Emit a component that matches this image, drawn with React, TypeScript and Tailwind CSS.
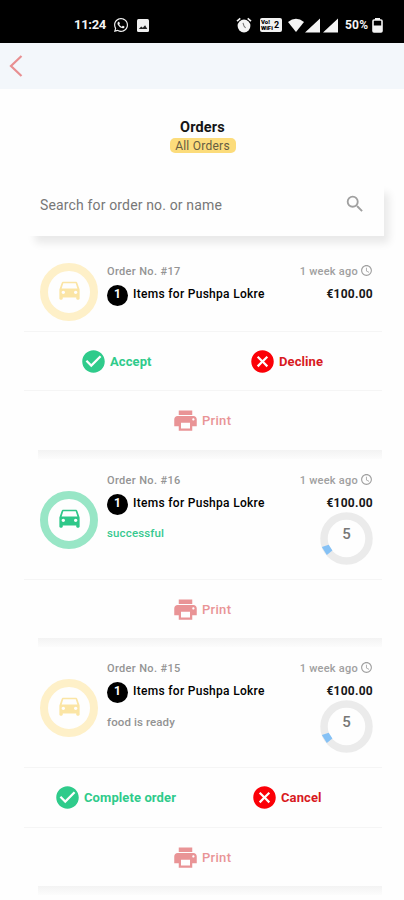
import React from "react";
import {
  MdAccessTime,
  MdCancel,
  MdCheckCircle,
  MdDirectionsCar,
  MdPrint,
  MdSearch,
} from "react-icons/md";
import { FaWhatsapp } from "react-icons/fa";

type Order = {
  id: number;
  status?: string;
  done?: boolean;
  timer?: boolean;
  accept?: string;
  reject?: string;
};

const orders: Order[] = [
  { id: 17, accept: "Accept", reject: "Decline" },
  { id: 16, status: "successful", done: true, timer: true },
  { id: 15, status: "food is ready", timer: true, accept: "Complete order", reject: "Cancel" },
];

function StatusBar() {
  return (
    <div className="flex h-[43px] items-start bg-black pt-[15px] text-[#f4f4f4]">
      <div className="ml-[74px] flex h-5 w-[78px] items-center">
        <span className="w-[39px] text-[13px] font-bold leading-5 tracking-[-0.3px]">11:24</span>
        <FaWhatsapp size={16} className="shrink-0" />
        <svg className="ml-[8px] shrink-0" width="12" height="13" viewBox="0 0 12 13">
          <rect width="12" height="13" rx="1.5" fill="#f0f0f0" />
          <path d="M1.8 10l2.4-2.5 1.6 1.2 2.3-2.4 2.2 3.7z" fill="#222" />
        </svg>
      </div>
      <div className="ml-[84px] flex h-5 items-center">
        <svg width="16" height="16" viewBox="0 0 16 16">
          <circle cx="8" cy="9" r="6.4" fill="#f4f4f4" />
          <path d="M1 4.2L4.3 1.4M15 4.2l-3.3-2.8" stroke="#f4f4f4" strokeWidth="1.6" />
          <path d="M7 5.8l1 3.2 1.6 2" stroke="#777" strokeWidth="1.1" fill="none" />
        </svg>
        <div className="ml-[8px] flex h-[14px] w-[22px] items-center rounded-[2px] bg-[#f2f2f2] text-black">
          <div className="flex w-[14px] flex-col pl-px text-[6px] font-black leading-[6px]">
            <span>Vo!</span>
            <span>WiFi</span>
          </div>
          <span className="text-[9px] font-bold leading-none">2</span>
        </div>
        <svg className="ml-[6px]" width="53" height="15" viewBox="0 0 53 15" fill="#f5f5f5">
          <path d="M0 4Q8 -2.5 16 4L8 14z" />
          <path d="M17 14.5L32 .5v14zM35 14.5L50 .5v14z" />
        </svg>
        <span className="ml-[4px] w-[25px] text-[12px] font-bold leading-5 tracking-[0.2px]">50%</span>
        <svg className="ml-[2px]" width="11" height="15" viewBox="0 0 11 15">
          <path d="M3 0h5v2h-5z" fill="#f4f4f4" />
          <rect x="1" y="2" width="9" height="12" rx="1" fill="none" stroke="#f4f4f4" strokeWidth="1.6" />
          <path d="M1 7.5h9V14H1z" fill="#f4f4f4" />
        </svg>
      </div>
    </div>
  );
}

function Timer() {
  return (
    <div className="grid h-[53px] w-[53px] place-items-center">
      <svg className="col-start-1 row-start-1" width="53" height="53" viewBox="0 0 53 53">
        <circle cx="26.5" cy="26.5" r="22.5" fill="none" stroke="#ebebeb" strokeWidth="7.5" />
        <path d="M1.8 35L8.7 32.8L12.4 38.4L6.8 43z" fill="#85c1f5" />
      </svg>
      <span className="col-start-1 row-start-1 -mt-[9px] text-[15px] font-medium leading-5 text-[#777]">5</span>
    </div>
  );
}

function Action({ label, accept }: { label: string; accept?: boolean }) {
  return (
    <div className={"flex items-center gap-[3px] text-[13px] font-bold " + (accept ? "tracking-[0.1px] text-[#2fcb8b]" : "tracking-[0.1px] text-[#d81a1f]")}>
      {accept ? <MdCheckCircle size={27} className="text-[#2fcb8b]" /> : <MdCancel size={27} className="text-[#fb0007]" />}
      <span className="pt-px">{label}</span>
    </div>
  );
}

function OrderCard({ order }: { order: Order }) {
  const ring = order.done ? "border-[#98e6c6] text-[#2fc789]" : "border-[#fef0c8] text-[#fbe5a5]";
  return (
    <article className="ml-6 mr-[22px]">
      <div className={"flex pl-4 " + (order.timer ? "h-[129px]" : "h-[90px]")}>
        <div className={"flex h-[58px] w-[58px] shrink-0 items-center justify-center rounded-full border-8 pb-[5px] " + ring + (order.timer ? " mt-[41px]" : " mt-[22px]")}>
          <MdDirectionsCar size={27} className="shrink-0" />
        </div>
        <div className="ml-[9px] flex-1 pt-[22px]">
          <div className="h-4 whitespace-nowrap pt-px text-[11px] font-medium leading-4 tracking-[0.35px] text-[#949494]">Order No. #{order.id}</div>
          <div className="mt-[4px] flex h-[22px] items-start">
            <span className="mt-[2px] flex h-[21px] w-[21px] items-center justify-center rounded-full bg-black pb-[3px] text-[12px] font-bold text-white">1</span>
            <span className="ml-[5px] whitespace-nowrap pt-px text-[12px] font-medium leading-[20px] tracking-[0.3px] text-black">Items for Pushpa Lokre</span>
          </div>
          {order.status && (
            <div className={"mt-[11px] text-[11.5px] font-medium leading-4 " + (order.done ? "tracking-[0.15px] text-[#38c990]" : "pt-px tracking-[0.1px] text-[#939393]")}>{order.status}</div>
          )}
        </div>
        <div className="mr-[9px] flex w-[78px] flex-col items-end pt-[22px]">
          <div className="flex h-4 items-center gap-[2px] whitespace-nowrap text-[11px] font-medium tracking-[0.25px] text-[#a0a0a0]">
            <span className="pt-[2px]">1 week ago</span>
            <MdAccessTime size={13} className="-mt-px" />
          </div>
          <div className="mt-[4px] h-5 pt-px text-[12px] font-bold leading-[20px] tracking-[0.25px] text-[#171717]">€100.00</div>
          {order.timer && <Timer />}
        </div>
      </div>
      {order.accept && (
        <div className={"flex border-t border-[#f5f5f5] " + (order.timer ? "h-[60px] pl-[30px]" : "h-[59px] pl-[56px]")}>
          <div className={order.timer ? "flex w-[197px] items-center" : "flex w-[169px] items-center"}>
            <Action label={order.accept} accept />
          </div>
          <div className="flex items-center"><Action label={order.reject ?? ""} /></div>
        </div>
      )}
      <div className={"flex items-center border-t border-[#f5f5f5] pl-[148px] text-[13px] font-medium tracking-[0.3px] text-[#e99496] " + (order.id === 17 ? "h-[60px]" : "h-[59px]")}>
        <MdPrint size={27} className="mr-[3px]" />
        <span className="pt-px">Print</span>
      </div>
    </article>
  );
}

function Divider() {
  return <div className="-mb-[9px] ml-[38px] mr-[22px] h-[9px] bg-linear-to-b from-[#f3f3f3] to-[#fcfcfc]" />;
}

export default function App() {
  return (
    <main className="h-[900px] w-[404px] overflow-hidden bg-[#fefefe] font-['Roboto',sans-serif]">
      <StatusBar />
      <header className="flex h-[46px] items-center bg-[#f3f7fb] pl-[9px]">
        <svg width="14" height="22" viewBox="0 0 14 22" fill="none" stroke="#e88f91" strokeWidth="2.2">
          <path d="M12.5 1L2 11l10.5 10" />
        </svg>
      </header>
      <div className="flex h-[91px] flex-col items-center pl-px pt-[29px]">
        <h1 className="h-5 text-[14.5px] font-bold leading-5 tracking-[0.15px] text-[#151515]">Orders</h1>
        <span className="h-[15px] w-[66px] rounded-[5px] bg-[#fcdc7b] text-center text-[12px] leading-[16px] tracking-[0.25px] text-[#655c43]">All Orders</span>
      </div>
      <div className="ml-6 mr-5 flex h-[56px] items-center justify-between bg-[#fefefe] pb-[6px] pl-4 pr-[18px] shadow-[8px_10px_8px_-3px_rgba(0,0,0,0.085)]">
        <span className="text-[14px] leading-5 tracking-[0.15px] text-[#777]">Search for order no. or name</span>
        <MdSearch size={22} className="-mt-[3px] text-[#a0a0a0]" />
      </div>
      <div className="pt-[5px]">
        {orders.map((order) => (
          <div key={order.id}>
            <OrderCard order={order} />
            <Divider />
          </div>
        ))}
      </div>
    </main>
  );
}
